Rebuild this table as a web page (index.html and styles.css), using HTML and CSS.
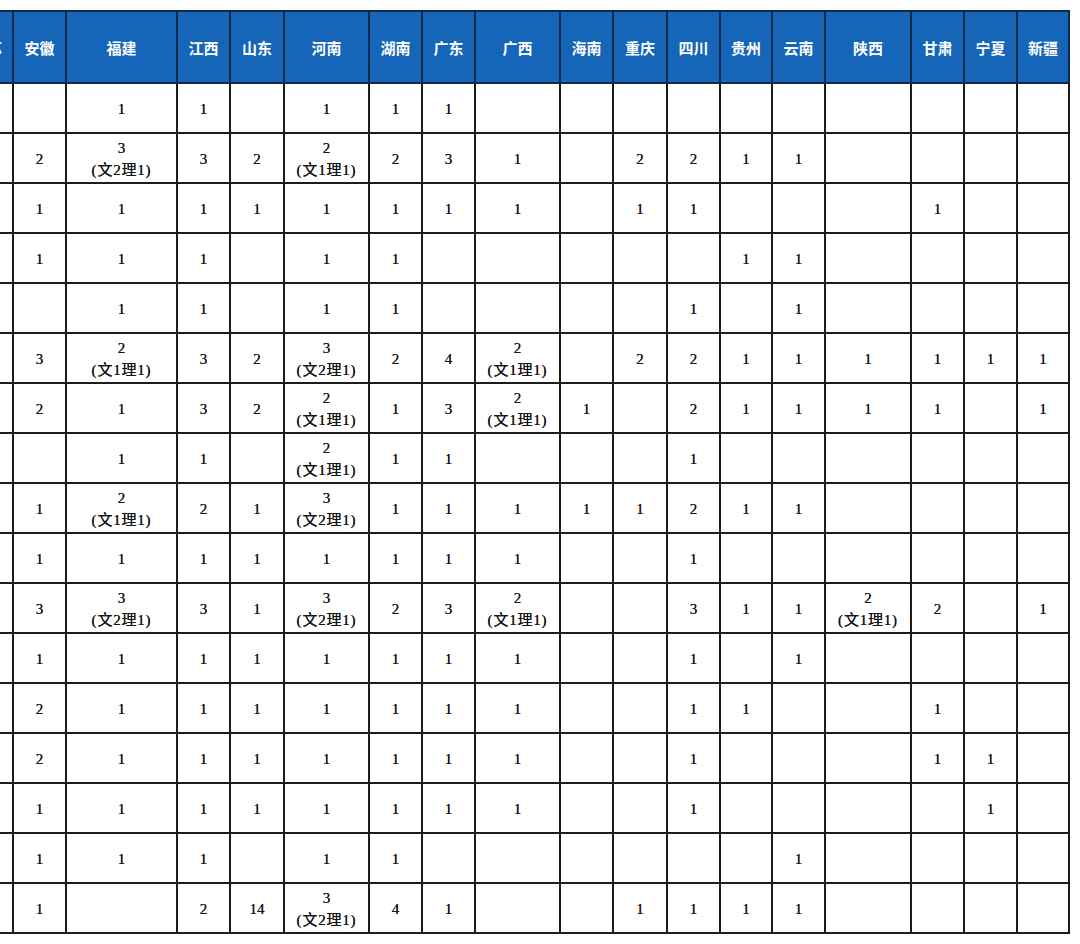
FILE: index.html
```html
<!DOCTYPE html>
<html lang="zh-CN">
<head>
<meta charset="utf-8">
<title>招生计划</title>
<link rel="stylesheet" href="styles.css">
</head>
<body>
<table class="plan">
<colgroup>
<col class="w-cut"><col class="w53"><col class="w111"><col class="w53"><col class="w54"><col class="w85"><col class="w53"><col class="w53"><col class="w85"><col class="w53"><col class="w54"><col class="w53"><col class="w52"><col class="w53"><col class="w86"><col class="w53"><col class="w53"><col class="w52">
</colgroup>
<thead>
<tr><th>江苏</th><th>安徽</th><th>福建</th><th>江西</th><th>山东</th><th>河南</th><th>湖南</th><th>广东</th><th>广西</th><th>海南</th><th>重庆</th><th>四川</th><th>贵州</th><th>云南</th><th>陕西</th><th>甘肃</th><th>宁夏</th><th>新疆</th></tr>
</thead>
<tbody>
<tr><td></td><td></td><td>1</td><td>1</td><td></td><td>1</td><td>1</td><td>1</td><td></td><td></td><td></td><td></td><td></td><td></td><td></td><td></td><td></td><td></td></tr>
<tr><td></td><td>2</td><td>3<br><span class="split">(文2理1)</span></td><td>3</td><td>2</td><td>2<br><span class="split">(文1理1)</span></td><td>2</td><td>3</td><td>1</td><td></td><td>2</td><td>2</td><td>1</td><td>1</td><td></td><td></td><td></td><td></td></tr>
<tr><td></td><td>1</td><td>1</td><td>1</td><td>1</td><td>1</td><td>1</td><td>1</td><td>1</td><td></td><td>1</td><td>1</td><td></td><td></td><td></td><td>1</td><td></td><td></td></tr>
<tr><td></td><td>1</td><td>1</td><td>1</td><td></td><td>1</td><td>1</td><td></td><td></td><td></td><td></td><td></td><td>1</td><td>1</td><td></td><td></td><td></td><td></td></tr>
<tr><td></td><td></td><td>1</td><td>1</td><td></td><td>1</td><td>1</td><td></td><td></td><td></td><td></td><td>1</td><td></td><td>1</td><td></td><td></td><td></td><td></td></tr>
<tr><td></td><td>3</td><td>2<br><span class="split">(文1理1)</span></td><td>3</td><td>2</td><td>3<br><span class="split">(文2理1)</span></td><td>2</td><td>4</td><td>2<br><span class="split">(文1理1)</span></td><td></td><td>2</td><td>2</td><td>1</td><td>1</td><td>1</td><td>1</td><td>1</td><td>1</td></tr>
<tr><td></td><td>2</td><td>1</td><td>3</td><td>2</td><td>2<br><span class="split">(文1理1)</span></td><td>1</td><td>3</td><td>2<br><span class="split">(文1理1)</span></td><td>1</td><td></td><td>2</td><td>1</td><td>1</td><td>1</td><td>1</td><td></td><td>1</td></tr>
<tr><td></td><td></td><td>1</td><td>1</td><td></td><td>2<br><span class="split">(文1理1)</span></td><td>1</td><td>1</td><td></td><td></td><td></td><td>1</td><td></td><td></td><td></td><td></td><td></td><td></td></tr>
<tr><td></td><td>1</td><td>2<br><span class="split">(文1理1)</span></td><td>2</td><td>1</td><td>3<br><span class="split">(文2理1)</span></td><td>1</td><td>1</td><td>1</td><td>1</td><td>1</td><td>2</td><td>1</td><td>1</td><td></td><td></td><td></td><td></td></tr>
<tr><td></td><td>1</td><td>1</td><td>1</td><td>1</td><td>1</td><td>1</td><td>1</td><td>1</td><td></td><td></td><td>1</td><td></td><td></td><td></td><td></td><td></td><td></td></tr>
<tr><td></td><td>3</td><td>3<br><span class="split">(文2理1)</span></td><td>3</td><td>1</td><td>3<br><span class="split">(文2理1)</span></td><td>2</td><td>3</td><td>2<br><span class="split">(文1理1)</span></td><td></td><td></td><td>3</td><td>1</td><td>1</td><td>2<br><span class="split">(文1理1)</span></td><td>2</td><td></td><td>1</td></tr>
<tr><td></td><td>1</td><td>1</td><td>1</td><td>1</td><td>1</td><td>1</td><td>1</td><td>1</td><td></td><td></td><td>1</td><td></td><td>1</td><td></td><td></td><td></td><td></td></tr>
<tr><td></td><td>2</td><td>1</td><td>1</td><td>1</td><td>1</td><td>1</td><td>1</td><td>1</td><td></td><td></td><td>1</td><td>1</td><td></td><td></td><td>1</td><td></td><td></td></tr>
<tr><td></td><td>2</td><td>1</td><td>1</td><td>1</td><td>1</td><td>1</td><td>1</td><td>1</td><td></td><td></td><td>1</td><td></td><td></td><td></td><td>1</td><td>1</td><td></td></tr>
<tr><td></td><td>1</td><td>1</td><td>1</td><td>1</td><td>1</td><td>1</td><td>1</td><td>1</td><td></td><td></td><td>1</td><td></td><td></td><td></td><td></td><td>1</td><td></td></tr>
<tr><td></td><td>1</td><td>1</td><td>1</td><td></td><td>1</td><td>1</td><td></td><td></td><td></td><td></td><td></td><td></td><td>1</td><td></td><td></td><td></td><td></td></tr>
<tr><td></td><td>1</td><td></td><td>2</td><td>14</td><td>3<br><span class="split">(文2理1)</span></td><td>4</td><td>1</td><td></td><td></td><td>1</td><td>1</td><td>1</td><td>1</td><td></td><td></td><td></td><td></td></tr>
</tbody>
</table>
</body>
</html>
```
FILE: styles.css
```css
html, body {
  margin: 0;
  padding: 0;
  background: #ffffff;
}
body {
  overflow: hidden;
  font-family: "Liberation Serif", "Noto Sans CJK SC", serif;
  color: #161616;
}
.plan {
  border-collapse: collapse;
  table-layout: fixed;
  width: 1108px;
  margin: 10px 0 0 -40px;
}
.w-cut { width: 52px; }
.w52 { width: 52px; }
.w53 { width: 53px; }
.w54 { width: 54px; }
.w85 { width: 85px; }
.w86 { width: 86px; }
.w111 { width: 111px; }
.plan th,
.plan td {
  border: 2px solid #1c1c1c;
  padding: 0;
  text-align: center;
  vertical-align: middle;
  white-space: nowrap;
  overflow: hidden;
}
.plan thead tr { height: 72px; }
.plan tbody tr { height: 50px; }
.plan th {
  background: #1565b8;
  color: #ffffff;
  font-size: 15px;
  font-weight: bold;
  border-color: #0f2a48;
}
.plan td {
  font-size: 15px;
  line-height: 22px;
  padding-top: 2px;
  text-shadow: 0 0 0.4px #161616;
}
.split {
  letter-spacing: 0.8px;
}
```
